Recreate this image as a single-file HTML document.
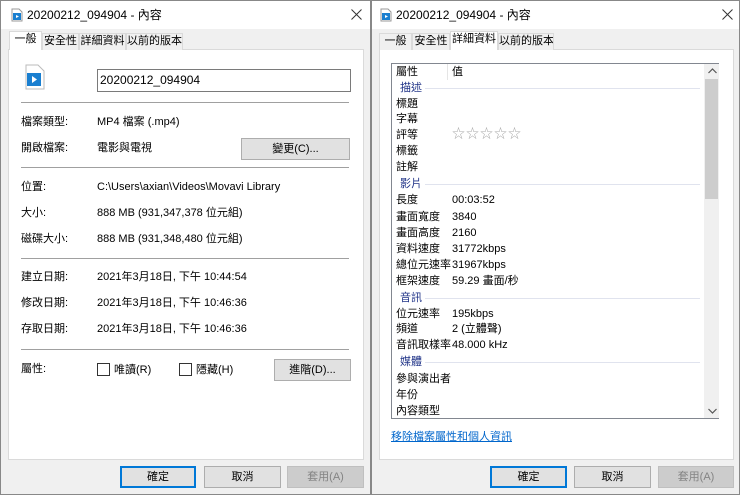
<!DOCTYPE html>
<html><head><meta charset="utf-8"><style>
*{margin:0;padding:0;box-sizing:border-box}
body{width:740px;height:495px;position:relative;background:#f0f0f0;font-family:"Liberation Sans","Noto Sans CJK TC",sans-serif;font-size:11px;line-height:14px;color:#000;overflow:hidden}
.a{position:absolute;white-space:nowrap}
.win{position:absolute;top:0;height:495px;background:#f0f0f0;border:1px solid #888}
.title{position:absolute;left:0;right:0;top:0;height:28px;background:#fff}
.panel{position:absolute;background:#fff;border:1px solid #dadada}
.tab{position:absolute;height:17px;background:#f0f0f0;border:1px solid #dadada;border-bottom:none;text-align:center;line-height:15px;white-space:nowrap;overflow:hidden}
.tab.s{background:#fff;height:19px;top:30px!important;z-index:2}
.btn{position:absolute;height:22px;background:#e1e1e1;border:1px solid #adadad;text-align:center;line-height:20px;white-space:nowrap}
.btn.d{background:#ccc;border-color:#bfbfbf;color:#838383}
.btn.p{border:2px solid #0078d7;line-height:18px}
.sep{position:absolute;height:1px;background:#a0a0a0}
.grp{color:#1e3287}
.gl{position:absolute;height:1px;background:#e0e3ee}
.cb{display:inline-block;width:13px;height:13px;border:1px solid #333;vertical-align:-3px;margin-right:4px;background:#fff}
.x{position:absolute;top:8px}
</style></head><body>
<div class="win" style="left:0;width:371px">
 <div class="title"></div>
 <svg class="a" style="left:10px;top:7px" width="12" height="14"><path d="M1 1h7l3 3v9H1z" fill="#fff" stroke="#999"/><rect x="2" y="5" width="8" height="7" fill="#1a7fd0"/><path d="M5 7l3 1.5-3 1.5z" fill="#fff"/></svg>
 <div class="a" style="left:26px;top:7px;font-size:12px">20200212_094904 - 內容</div>
 <svg class="x" style="left:350px" width="11" height="11"><path d="M0.5 0.5l10 10M10.5 0.5l-10 10" stroke="#333" stroke-width="1"/></svg>
 <div class="panel" style="left:7px;top:48px;width:356px;height:411px"></div>
 <div class="tab s" style="left:8px;top:31px;width:33px">一般</div>
 <div class="tab" style="left:41px;top:32px;width:37px">安全性</div>
 <div class="tab" style="left:78px;top:32px;width:47px">詳細資料</div>
 <div class="tab" style="left:125px;top:32px;width:57px">以前的版本</div>
 <svg class="a" style="left:24px;top:63px" width="20" height="26"><path d="M1 1h12l6 6v18H1z" fill="#fff" stroke="#bbb"/><rect x="2" y="9" width="14" height="13" fill="#1a7fd0"/><path d="M7 12l5 3.5-5 3.5z" fill="#fff"/></svg>
 <div class="a" style="left:96px;top:68px;width:254px;height:23px;border:1px solid #7a7a7a;background:#fff;padding:3px 2px;font-size:12px">20200212_094904</div>
 <div class="sep" style="left:20px;top:101px;width:328px"></div>
 <div class="a" style="left:20px;top:114px">檔案類型:</div><div class="a" style="left:96px;top:114px">MP4 檔案 (.mp4)</div>
 <div class="a" style="left:20px;top:140px">開啟檔案:</div><div class="a" style="left:96px;top:140px">電影與電視</div>
 <div class="btn" style="left:240px;top:137px;width:109px">變更(C)...</div>
 <div class="sep" style="left:20px;top:166px;width:328px"></div>
 <div class="a" style="left:20px;top:179px">位置:</div><div class="a" style="left:96px;top:179px">C:\Users\axian\Videos\Movavi Library</div>
 <div class="a" style="left:20px;top:205px">大小:</div><div class="a" style="left:96px;top:205px">888 MB (931,347,378 位元組)</div>
 <div class="a" style="left:20px;top:231px">磁碟大小:</div><div class="a" style="left:96px;top:231px">888 MB (931,348,480 位元組)</div>
 <div class="sep" style="left:20px;top:257px;width:328px"></div>
 <div class="a" style="left:20px;top:269px">建立日期:</div><div class="a" style="left:96px;top:269px">2021年3月18日, 下午 10:44:54</div>
 <div class="a" style="left:20px;top:295px">修改日期:</div><div class="a" style="left:96px;top:295px">2021年3月18日, 下午 10:46:36</div>
 <div class="a" style="left:20px;top:321px">存取日期:</div><div class="a" style="left:96px;top:321px">2021年3月18日, 下午 10:46:36</div>
 <div class="sep" style="left:20px;top:348px;width:328px"></div>
 <div class="a" style="left:20px;top:361px">屬性:</div>
 <div class="a" style="left:96px;top:362px"><span class="cb"></span>唯讀(R)</div>
 <div class="a" style="left:178px;top:362px"><span class="cb"></span>隱藏(H)</div>
 <div class="btn" style="left:273px;top:358px;width:77px">進階(D)...</div>
 <div class="btn p" style="left:119px;top:465px;width:76px">確定</div>
 <div class="btn" style="left:203px;top:465px;width:77px">取消</div>
 <div class="btn d" style="left:286px;top:465px;width:77px">套用(A)</div>
</div>
<div class="win" style="left:371px;width:369px">
 <div class="title"></div>
 <svg class="a" style="left:8px;top:7px" width="12" height="14"><path d="M1 1h7l3 3v9H1z" fill="#fff" stroke="#999"/><rect x="2" y="5" width="8" height="7" fill="#1a7fd0"/><path d="M5 7l3 1.5-3 1.5z" fill="#fff"/></svg>
 <div class="a" style="left:24px;top:7px;font-size:12px">20200212_094904 - 內容</div>
 <svg class="x" style="left:350px" width="11" height="11"><path d="M0.5 0.5l10 10M10.5 0.5l-10 10" stroke="#333" stroke-width="1"/></svg>
 <div class="panel" style="left:7px;top:48px;width:355px;height:411px"></div>
 <div class="tab" style="left:7px;top:32px;width:33px">一般</div>
 <div class="tab" style="left:40px;top:32px;width:38px">安全性</div>
 <div class="tab s" style="left:78px;top:31px;width:48px">詳細資料</div>
 <div class="tab" style="left:126px;top:32px;width:56px">以前的版本</div>
 <div class="a" style="left:19px;top:62px;width:328px;height:356px;border:1px solid #828790;background:#fff"></div>
 <div class="a" style="left:332px;top:63px;width:15px;height:354px;background:#f0f0f0"></div>
 <div class="a" style="left:333px;top:78px;width:13px;height:120px;background:#cdcdcd"></div>
 <svg class="a" style="left:336px;top:67px" width="9" height="6"><path d="M0.5 5l4-4 4 4" stroke="#555" fill="none" stroke-width="1.2"/></svg>
 <svg class="a" style="left:336px;top:407px" width="9" height="6"><path d="M0.5 1l4 4 4-4" stroke="#555" fill="none" stroke-width="1.2"/></svg>
 <div class="a" style="left:75px;top:63px;width:1px;height:16px;background:#e5e5e5"></div>
 <div class="a" style="left:24px;top:64px">屬性</div><div class="a" style="left:80px;top:64px">值</div>
 <div class="a grp" style="left:28px;top:80px">描述</div><div class="gl" style="left:53px;top:87px;width:275px"></div>
 <div class="a" style="left:24px;top:96px">標題</div>
 <div class="a" style="left:24px;top:111px">字幕</div>
 <div class="a" style="left:24px;top:127px">評等</div><div class="a" style="left:80px;top:126px;color:#aaa;font-size:13px;letter-spacing:1px">☆☆☆☆☆</div>
 <div class="a" style="left:24px;top:143px">標籤</div>
 <div class="a" style="left:24px;top:159px">註解</div>
 <div class="a grp" style="left:28px;top:176px">影片</div><div class="gl" style="left:53px;top:183px;width:275px"></div>
 <div class="a" style="left:24px;top:192px">長度</div><div class="a" style="left:80px;top:192px">00:03:52</div>
 <div class="a" style="left:24px;top:209px">畫面寬度</div><div class="a" style="left:80px;top:209px">3840</div>
 <div class="a" style="left:24px;top:225px">畫面高度</div><div class="a" style="left:80px;top:225px">2160</div>
 <div class="a" style="left:24px;top:241px">資料速度</div><div class="a" style="left:80px;top:241px">31772kbps</div>
 <div class="a" style="left:24px;top:257px">總位元速率</div><div class="a" style="left:80px;top:257px">31967kbps</div>
 <div class="a" style="left:24px;top:273px">框架速度</div><div class="a" style="left:80px;top:273px">59.29 畫面/秒</div>
 <div class="a grp" style="left:28px;top:290px">音訊</div><div class="gl" style="left:53px;top:297px;width:275px"></div>
 <div class="a" style="left:24px;top:306px">位元速率</div><div class="a" style="left:80px;top:306px">195kbps</div>
 <div class="a" style="left:24px;top:321px">頻道</div><div class="a" style="left:80px;top:321px">2 (立體聲)</div>
 <div class="a" style="left:24px;top:337px">音訊取樣率</div><div class="a" style="left:80px;top:337px">48.000 kHz</div>
 <div class="a grp" style="left:28px;top:354px">媒體</div><div class="gl" style="left:53px;top:361px;width:275px"></div>
 <div class="a" style="left:24px;top:371px">參與演出者</div>
 <div class="a" style="left:24px;top:387px">年份</div>
 <div class="a" style="left:24px;top:403px">內容類型</div>
 <div class="a" style="left:19px;top:429px;color:#0066cc;text-decoration:underline">移除檔案屬性和個人資訊</div>
 <div class="btn p" style="left:118px;top:465px;width:77px">確定</div>
 <div class="btn" style="left:202px;top:465px;width:77px">取消</div>
 <div class="btn d" style="left:286px;top:465px;width:76px">套用(A)</div>
</div>
</body></html>
